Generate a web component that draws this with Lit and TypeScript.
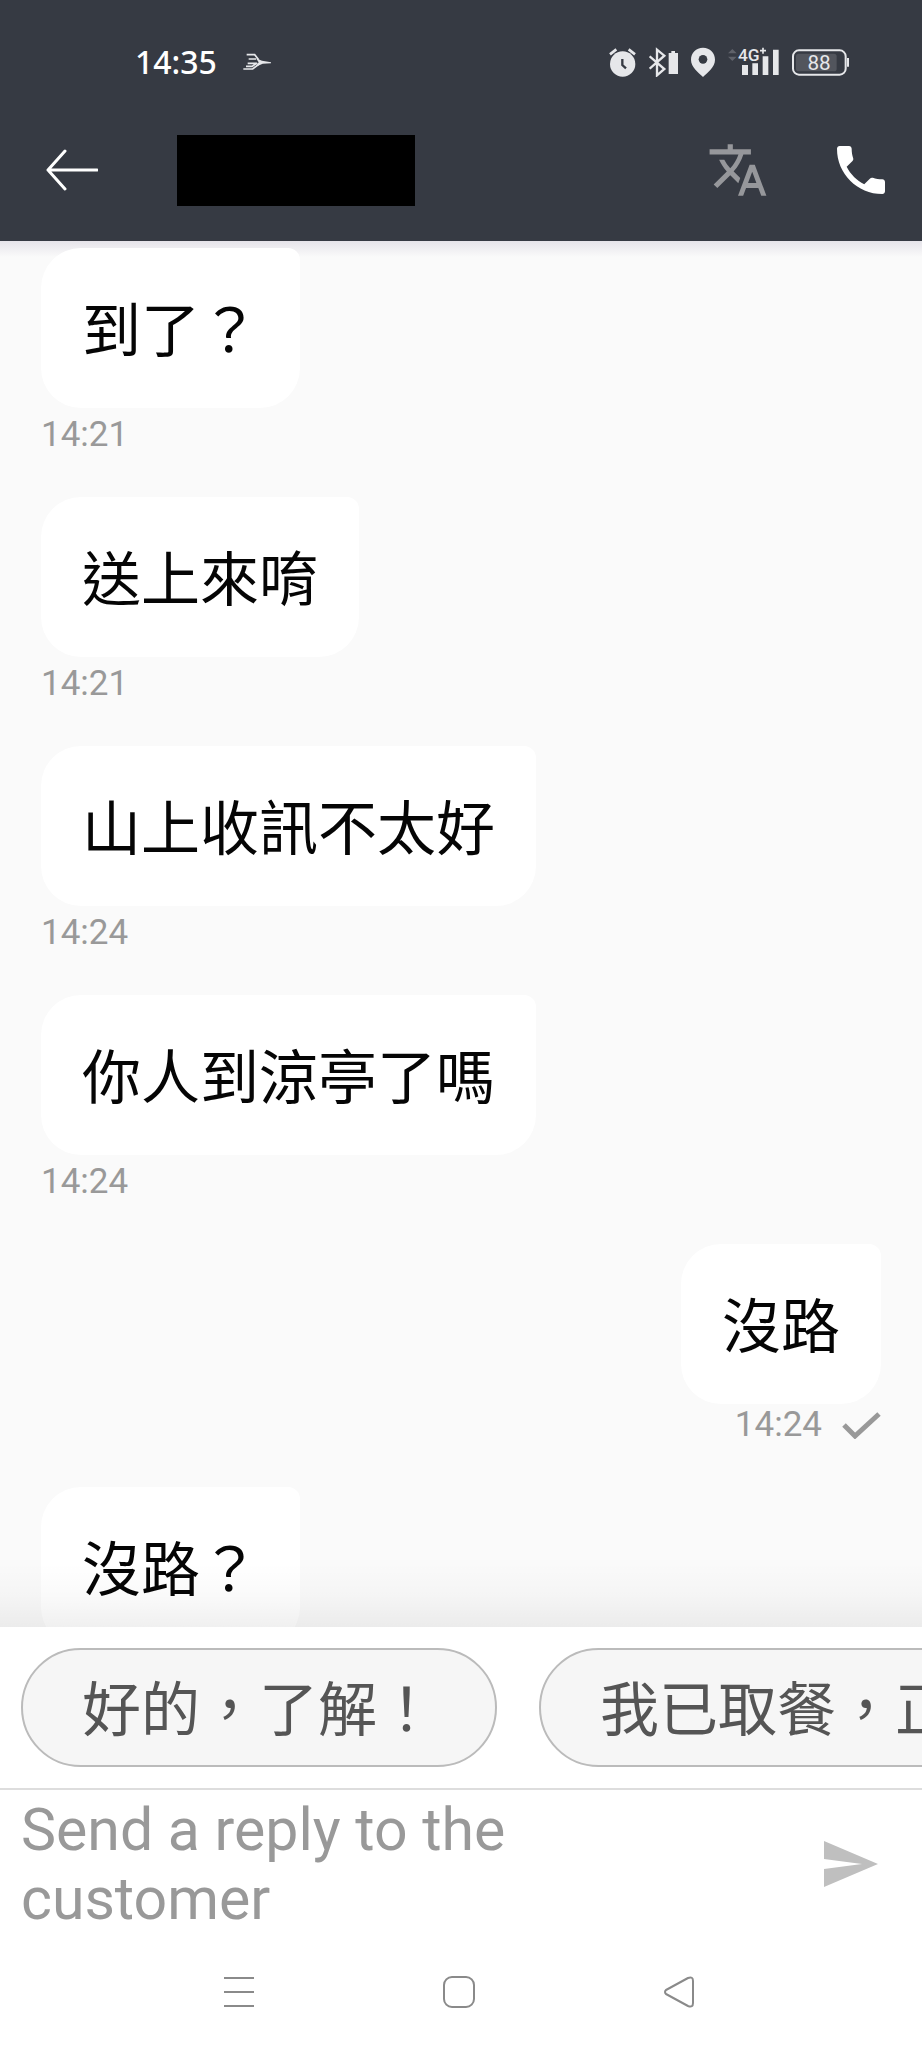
import { LitElement, html, css, nothing } from "lit";
import { customElement, property } from "lit/decorators.js";

interface Message {
  text: string;
  time?: string;
  sent?: boolean;
}

const MESSAGES: Message[] = [
  { text: "到了？", time: "14:21" },
  { text: "送上來唷", time: "14:21" },
  { text: "山上收訊不太好", time: "14:24" },
  { text: "你人到涼亭了嗎", time: "14:24" },
  { text: "沒路", time: "14:24", sent: true },
  { text: "沒路？" },
];

const REPLIES = ["好的，了解！", "我已取餐，正"];

@customElement("status-bar")
class StatusBar extends LitElement {
  static styles = css`
    :host {
      display: flex;
      align-items: center;
      justify-content: space-between;
      height: 75px;
      padding: 24px 73px 0 135px;
      color: #fff;
    }
    .clock,
    .indicators {
      display: flex;
      align-items: center;
    }
    .clock {
      gap: 26px;
      font: 500 32px/40px "Noto Sans", sans-serif;
    }
    .indicators {
      gap: 13px;
    }
    svg {
      display: block;
      fill: #e6e7ea;
    }
    .line {
      fill: none;
      stroke: #e6e7ea;
    }
    .hole {
      fill: #363a43;
    }
    .dim {
      fill: #5f626a;
    }
    .level {
      fill: #52555d;
    }
    .network {
      font: 500 52px "Roboto", sans-serif;
    }
    .percent {
      font: 400 62px "Roboto", sans-serif;
    }
  `;

  render() {
    return html`
      <div class="clock">
        <span>14:35</span>
        <svg width="28" height="18" viewBox="427 70 84 54">
          <path
            class="line"
            stroke-width="5"
            d="M438 75H462L474 90M444 88H466M441 101H466M436 110H454L470 100M428 118H456L474 104"
          />
          <path d="M466 86L484 93L511 98V101L486 102L464 112L474 98Z" />
        </svg>
      </div>
      <div class="indicators">
        <svg width="27" height="30" viewBox="54 48 81 90">
          <circle cx="95" cy="99" r="38" />
          <path class="line" stroke-width="8" d="M57 70L76 55M113 55L132 70" />
          <path
            fill="none"
            stroke="#363a43"
            stroke-width="7"
            d="M94 84V102L105 112"
          />
        </svg>
        <svg width="29" height="30" viewBox="174 48 87 90">
          <path
            class="line"
            stroke-width="7"
            d="M176 76L220 114L198 133V56L220 74L176 113"
          />
          <path d="M241 60h11v6h9v63h-28V66h8z" />
        </svg>
        <svg width="24" height="30" viewBox="304 48 72 90">
          <path
            d="M340 50C319 50 304 66 304 86C304 108 326 124 340 138C354 124 376 108 376 86C376 66 361 50 340 50Z"
          />
          <circle class="hole" cx="340" cy="85" r="13" />
        </svg>
        <svg width="51" height="30" viewBox="414 48 153 90">
          <path class="dim" d="M414 67L427 54L440 67ZM414 77H440L427 90Z" />
          <path
            d="M456 102h18v30h-18zM487 97h17v35h-17zM518 76h17v56h-17zM549 56h17v76h-17z"
          />
          <path class="line" stroke-width="5" d="M510 59h18M519 50v18" />
          <text class="network" x="444" y="90">4G</text>
        </svg>
        <svg width="57" height="30" viewBox="606 48 171 90">
          <rect
            class="line"
            x="609"
            y="58"
            width="158"
            height="73"
            rx="18"
            stroke-width="6"
          />
          <rect class="level" x="618" y="68" width="122" height="53" rx="8" />
          <path d="M771 81h6v26h-6z" />
          <text class="percent" x="687" y="117" text-anchor="middle">88</text>
        </svg>
      </div>
    `;
  }
}

@customElement("chat-message")
class ChatMessage extends LitElement {
  @property() text = "";
  @property() time?: string;
  @property({ type: Boolean, reflect: true }) sent = false;

  static styles = css`
    :host {
      display: flex;
      flex-direction: column;
      align-items: flex-start;
      gap: 6px;
    }
    :host([sent]) {
      align-items: flex-end;
      gap: 0;
    }
    .bubble {
      padding: 45px 41px 37px;
      border-radius: 40px 12px 40px 40px;
      background: #fff;
      color: #050505;
      font-size: 59px;
      line-height: 78px;
      white-space: nowrap;
    }
    .meta {
      display: flex;
      align-items: center;
      gap: 20px;
      color: #999;
      font-size: 35px;
      line-height: 41px;
    }
    .tick {
      display: block;
      fill: none;
      stroke: #999;
      stroke-width: 5;
    }
  `;

  render() {
    return html`
      <div class="bubble">${this.text}</div>
      ${this.time
        ? html`<div class="meta">
            <time>${this.time}</time>
            ${this.sent
              ? html`<svg class="tick" width="39" height="28" viewBox="0 0 39 28">
                  <path d="M2 14L13 25L37 3" />
                </svg>`
              : nothing}
          </div>`
        : nothing}
    `;
  }
}

@customElement("app-root")
class AppRoot extends LitElement {
  static styles = css`
    :host {
      display: flex;
      flex-direction: column;
      height: 100vh;
      overflow: hidden;
      background: #fafafa;
      font-family: "Roboto", "Noto Sans CJK TC", sans-serif;
    }
    button {
      display: grid;
      place-items: center;
      margin: 0;
      padding: 0;
      border: 0;
      background: none;
      font: inherit;
      color: inherit;
    }
    svg {
      display: block;
    }
    .header {
      background: #363a43;
    }
    .appbar {
      display: flex;
      align-items: center;
      height: 142px;
      padding: 0 29px 0 46px;
    }
    .contact {
      width: 238px;
      height: 71px;
      margin-left: 79px;
      background: #000;
    }
    .actions {
      display: flex;
      align-items: center;
      gap: 60px;
      margin-left: auto;
    }
    .back {
      fill: none;
      stroke: #fff;
      stroke-width: 3;
      stroke-linecap: round;
      stroke-linejoin: round;
    }
    .translate {
      fill: #96979b;
    }
    .call {
      fill: #fff;
    }
    .messages {
      position: relative;
      z-index: 0;
      flex: 1;
      min-height: 0;
      overflow: hidden;
    }
    .messages::before,
    .messages::after {
      content: "";
      position: absolute;
      left: 0;
      right: 0;
      pointer-events: none;
    }
    .messages::before {
      top: 0;
      height: 16px;
      background: linear-gradient(#e6e4ea, rgba(250, 250, 250, 0));
      z-index: -1;
    }
    .messages::after {
      bottom: 0;
      height: 64px;
      background: linear-gradient(
        rgba(0, 0, 0, 0),
        rgba(0, 0, 0, 0.02) 50%,
        rgba(0, 0, 0, 0.06)
      );
    }
    .thread {
      display: flex;
      flex-direction: column;
      gap: 42px;
      padding: 7px 41px 41px;
    }
    .footer {
      background: #fff;
    }
    .replies {
      display: flex;
      gap: 42px;
      padding: 21px;
      overflow: hidden;
      border-bottom: 2px solid #ddd;
    }
    .reply {
      flex: none;
      padding: 6px 59px 0;
      border: 2px solid #bbb;
      border-radius: 60px;
      background: #f6f6f6;
      color: #555;
      font-size: 59px;
      line-height: 109px;
      white-space: nowrap;
    }
    .compose {
      display: flex;
      align-items: center;
      gap: 41px;
      padding: 5px 0 5px 21px;
    }
    .input {
      flex: 1;
      min-width: 0;
      margin: 0;
      padding: 0;
      border: 0;
      outline: 0;
      resize: none;
      overflow: hidden;
      background: none;
      color: #222;
      font: 400 59px/69px "Roboto", "Noto Sans CJK TC", sans-serif;
    }
    .input::placeholder {
      color: #999;
      opacity: 1;
    }
    .send {
      width: 142px;
      height: 120px;
      fill: #bfbfbf;
    }
    .nav {
      display: flex;
      justify-content: center;
      padding: 0 4px 2px 0;
    }
    .key {
      width: 220px;
      height: 108px;
      fill: none;
      stroke: #8a8a8a;
      stroke-width: 2;
      stroke-linejoin: round;
    }
  `;

  render() {
    return html`
      <header class="header">
        <status-bar></status-bar>
        <div class="appbar">
          <button class="back" aria-label="Back">
            <svg width="52" height="42" viewBox="0 0 52 42">
              <path d="M51 21H2M19 2L2 21L19 40" />
            </svg>
          </button>
          <div class="contact"></div>
          <div class="actions">
            <button class="translate" aria-label="Translate">
              <svg width="62" height="62" viewBox="0 0 24 24">
                <path
                  d="M12.87 15.07l-2.54-2.51.03-.03c1.74-1.94 2.98-4.17 3.71-6.53H17V4h-7V2H8v2H1v1.99h11.17C11.5 7.92 10.44 9.75 9 11.35 8.07 10.32 7.3 9.19 6.69 8h-2c.73 1.63 1.73 3.17 2.98 4.56l-5.09 5.02L4 19l5-5 3.11 3.11.76-2.04zM18.5 10h-2L12 22h2l1.12-3h4.75L21 22h2l-4.5-12zm-2.62 7l1.62-4.33L19.12 17h-3.24z"
                />
              </svg>
            </button>
            <button class="call" aria-label="Call">
              <svg width="64" height="64" viewBox="0 0 24 24">
                <path
                  d="M6.62 10.79c1.44 2.83 3.76 5.14 6.59 6.59l2.2-2.2c.27-.27.67-.36 1.02-.24 1.12.37 2.33.57 3.57.57.55 0 1 .45 1 1V20c0 .55-.45 1-1 1-9.39 0-17-7.61-17-17 0-.55.45-1 1-1h3.5c.55 0 1 .45 1 1 0 1.25.2 2.45.57 3.57.11.35.03.74-.25 1.02l-2.2 2.2z"
                />
              </svg>
            </button>
          </div>
        </div>
      </header>
      <main class="messages">
        <div class="thread">
          ${MESSAGES.map(
            (m) => html`<chat-message
              .text=${m.text}
              .time=${m.time}
              .sent=${m.sent ?? false}
            ></chat-message>`
          )}
        </div>
      </main>
      <footer class="footer">
        <div class="replies">
          ${REPLIES.map((r) => html`<button class="reply">${r}</button>`)}
        </div>
        <div class="compose">
          <textarea
            class="input"
            rows="2"
            aria-label="Send a reply to the customer"
            placeholder="Send a reply to the customer"
          ></textarea>
          <button class="send" aria-label="Send">
            <svg width="54" height="46" viewBox="0 0 54 46">
              <path d="M0 0L54 23L0 46V28L38 23L0 18Z" />
            </svg>
          </button>
        </div>
        <nav class="nav">
          <button class="key" aria-label="Recent apps">
            <svg width="30" height="32" viewBox="0 0 30 32">
              <path d="M0 2H30M0 16H30M0 30H30" />
            </svg>
          </button>
          <button class="key" aria-label="Home">
            <svg width="32" height="32" viewBox="0 0 32 32">
              <rect x="1" y="1" width="30" height="30" rx="8" />
            </svg>
          </button>
          <button class="key" aria-label="Back">
            <svg width="30" height="32" viewBox="0 0 30 32">
              <path
                d="M2 14L24 2Q29 0 29 5V27Q29 32 24 30L2 18Q0 16 2 14Z"
              />
            </svg>
          </button>
        </nav>
      </footer>
    `;
  }
}
